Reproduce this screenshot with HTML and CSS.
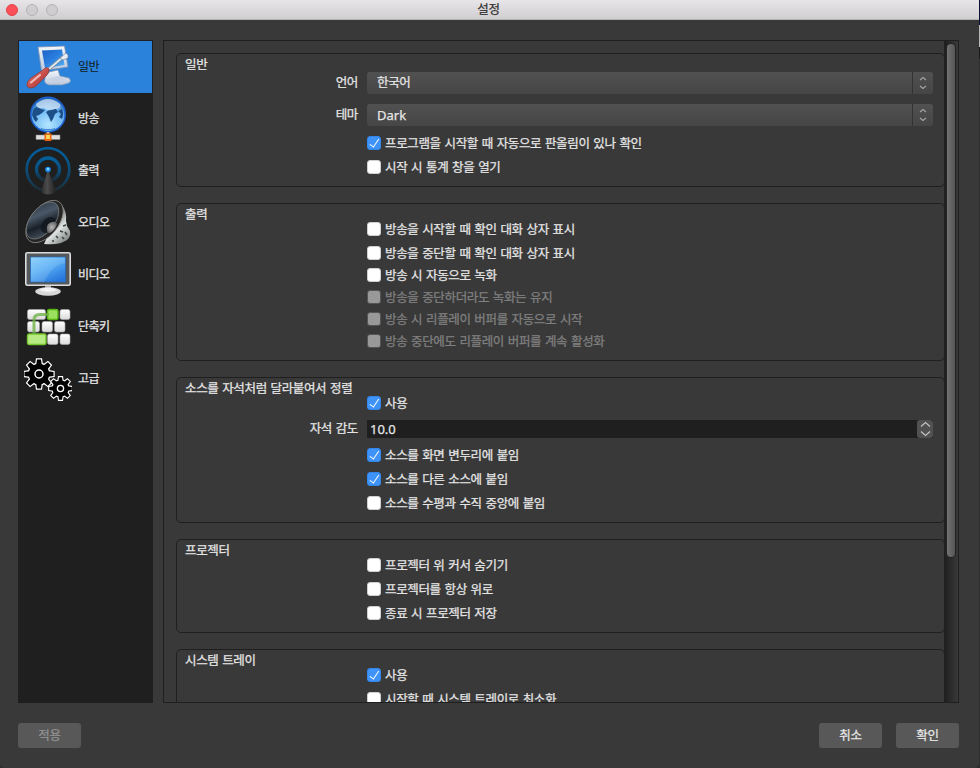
FILE: index.html
```html
<!DOCTYPE html>
<html lang="ko">
<head>
<meta charset="utf-8">
<title>설정</title>
<link rel="stylesheet" href="styles.css">
</head>
<body>
<svg width="0" height="0" class="defs">
  <defs>
    <linearGradient id="screen" x1="0" y1="0" x2="1" y2="1"><stop offset="0" stop-color="#1c62c4"/><stop offset=".5" stop-color="#2a7fe0"/><stop offset="1" stop-color="#5cb4f4"/></linearGradient>
    <linearGradient id="white" x1="0" y1="0" x2="0" y2="1"><stop offset="0" stop-color="#f4f7fb"/><stop offset="1" stop-color="#b9c6da"/></linearGradient>
    <linearGradient id="red" x1="0" y1="0" x2="1" y2="1"><stop offset="0" stop-color="#e79a98"/><stop offset=".5" stop-color="#c9504c"/><stop offset="1" stop-color="#9a2c2a"/></linearGradient>
    <radialGradient id="globe" cx=".5" cy=".8" r=".8"><stop offset="0" stop-color="#b4e6ff"/><stop offset=".6" stop-color="#6cb6f3"/><stop offset="1" stop-color="#1d5cab"/></radialGradient>
    <linearGradient id="ring" x1="0" y1="0" x2="0" y2="1"><stop offset="0" stop-color="#045f9c"/><stop offset=".6" stop-color="#0c4a74"/><stop offset="1" stop-color="#1c2c36"/></linearGradient>
    <linearGradient id="cone" x1="0" y1="0" x2="1" y2="0"><stop offset="0" stop-color="#2a2a2a"/><stop offset=".4" stop-color="#4c4c4c"/><stop offset="1" stop-color="#202020"/></linearGradient>
    <linearGradient id="speaker" x1="0" y1="0" x2="1" y2="1"><stop offset="0" stop-color="#2b3440"/><stop offset=".35" stop-color="#4a5867"/><stop offset=".6" stop-color="#1a2028"/><stop offset="1" stop-color="#566574"/></linearGradient>
    <radialGradient id="dust"><stop offset="0" stop-color="#b8b8b8"/><stop offset="1" stop-color="#6a6a6a"/></radialGradient>
    <linearGradient id="magnet" x1="0" y1="0" x2=".6" y2="1"><stop offset="0" stop-color="#333"/><stop offset=".45" stop-color="#8c918f"/><stop offset=".7" stop-color="#dfe3e2"/><stop offset="1" stop-color="#8d9492"/></linearGradient>
    <linearGradient id="video" x1="0" y1="0" x2=".7" y2="1"><stop offset="0" stop-color="#84cdfb"/><stop offset=".5" stop-color="#58aef5"/><stop offset="1" stop-color="#2877dc"/></linearGradient>
    <linearGradient id="key" x1="0" y1="0" x2="0" y2="1"><stop offset="0" stop-color="#fff"/><stop offset="1" stop-color="#dadada"/></linearGradient>
    <g id="teeth"><circle r="10.3"/><g id="tooth4"><path d="M-2.8-9L-2-14.5H2L2.8-9V9L2 14.5H-2L-2.8 9Z"/><path transform="rotate(90)" d="M-2.8-9L-2-14.5H2L2.8-9V9L2 14.5H-2L-2.8 9Z"/></g><use href="#tooth4" transform="rotate(45)"/></g>
  </defs>
</svg>
<div class="window">
  <header class="titlebar">
    <div class="lights"><i class="light close"></i><i class="light"></i><i class="light"></i></div>
    <h1>설정</h1>
  </header>
  <main class="body">
    <nav class="sidebar">
      <a class="item selected">
        <svg viewBox="0 0 48 48">
          <path d="M21 34L25 29 34 27 36 33 45 35Q48 38 45 40L38 42 25 42Q19 40 21 36Z" fill="url(#white)" stroke="#7c95b8" stroke-width=".7"/>
          <path d="M24 36L35 33 42 36 30 39Z" fill="#c6d2e4"/>
          <path d="M14 4L40.500 3 44 24 17.500 28Z" fill="url(#white)" stroke="#7b92b5" stroke-width=".8"/>
          <path d="M18 7.500L38 6.500 40.500 22 21 25Z" fill="url(#screen)"/>
          <path d="M25 26L39 14" stroke="#6c8095" stroke-width="3.600"/><path d="M25 26L39 14" stroke="#dce5ee" stroke-width="2.200"/>
          <path d="M36 15L42 10 44 12 44 15 39 17Z" fill="#e7edf4" stroke="#71849b" stroke-width=".7"/>
          <path d="M19 27Q22 23 25 26Q26 29 22 33L12 43Q6 47 3 43Q2 39 7 35Z" fill="url(#red)" stroke="#8b3a3a" stroke-width=".8"/>
          <path d="M7 39.500L16 32" stroke="#eebdba" stroke-width="2" stroke-linecap="round"/>
        </svg><span>일반</span></a>
      <a class="item">
        <svg viewBox="0 0 48 48">
          <circle cx="24" cy="19.500" r="17.200" fill="url(#globe)" stroke="#1d62cf" stroke-width="1.600"/>
          <path d="M9 15Q10 13 13 12L17 14 21 15 18 18 15 20 12 21 14 24 12 27Q9 24 8 20ZM22 17L27 14 32 14 34 17 31 19 29 24 27 27 25 22ZM34 16L38 14Q40 19 38 24L35 22 37 19Z" fill="#1c4f87"/>
          <path d="M12 9Q24-1 36 9Q38 14 31 14Q25 17 20 13Q12 14 12 9Z" fill="#dcebfa" opacity=".7"/>
          <path d="M17 33.500Q24 36 31 33.500" fill="none" stroke="#4289cf" stroke-width="1.300"/>
          <rect x="22.500" y="37" width="3" height="3" fill="#bbb"/><rect x="12" y="40" width="24" height="4.500" fill="#dedede" stroke="#888" stroke-width=".5"/>
          <rect x="20.500" y="38.500" width="7" height="7.500" rx="1" fill="#ee650c"/><rect x="22" y="40" width="4" height="4" fill="#ffd35a"/>
        </svg><span>방송</span></a>
      <a class="item">
        <svg viewBox="0 0 48 48">
          <circle cx="24" cy="22.500" r="21.300" fill="none" stroke="url(#ring)" stroke-width="2.600"/><circle cx="24" cy="22.500" r="11.500" fill="none" stroke="url(#ring)" stroke-width="3.400"/>
          <path d="M23.500 24H24.500L32 45Q24 50 17 45Z" fill="url(#cone)"/><circle cx="24" cy="22.500" r="2.800" fill="#178bea"/><circle cx="24" cy="22" r="1.300" fill="#8bd7ff"/>
        </svg><span>출력</span></a>
      <a class="item">
        <svg viewBox="0 0 48 48">
          <path d="M38 6Q43 13 42 22L43 27 46 32Q47 38 43 41L37 44Q30 46 20 45Z" fill="url(#magnet)"/>
          <path d="M39 27L42 26M36 32L39 33M41 33L43 36M32 37L34 39M38 38L40 40M28 42L30 42" stroke="#3c4341" stroke-width="1.600"/>
          <ellipse cx="20.500" cy="22.500" rx="14" ry="24.500" transform="rotate(38 20.500 22.500)" fill="#252525" stroke="#8a8a86" stroke-width=".8"/>
          <ellipse cx="18.500" cy="21.500" rx="12" ry="21.500" transform="rotate(38 18.500 21.500)" fill="url(#speaker)" stroke="#77797a" stroke-width=".8"/>
          <ellipse cx="24" cy="26" rx="6" ry="9" transform="rotate(38 24 26)" fill="#11161d" opacity=".8"/>
          <path d="M23 31Q22 24 28 23Q32 22 33 25Q31 31 26 34Q23 34 23 31Z" fill="url(#dust)"/>
        </svg><span>오디오</span></a>
      <a class="item">
        <svg viewBox="0 0 48 48">
          <path d="M21 34H27V40H21Z" fill="#aaa"/><ellipse cx="24" cy="40.500" rx="12.800" ry="4.200" fill="#d8d8d8"/><path d="M15 39Q24 34 33 39Q24 43 15 39Z" fill="#f3f3f3"/>
          <rect x="1.800" y="1.800" width="44.400" height="32.400" rx="1.500" fill="#55595c" stroke="#dcdcdc" stroke-width="1.600"/>
          <rect x="6.500" y="6" width="35" height="25" fill="url(#video)" stroke="#2467b5" stroke-width=".7"/><path d="M7 6.500H41V12Q28 14 20 31H7Z" fill="#fff" opacity=".12"/>
        </svg><span>비디오</span></a>
      <a class="item">
        <svg viewBox="0 0 48 48">
          <g fill="url(#key)" stroke="#a7a7a7" stroke-width=".6"><rect x="3.500" y="6.500" width="18" height="10" rx="2"/><rect x="36" y="6.500" width="10" height="10" rx="2"/><rect x="3.500" y="18.500" width="12" height="10.500" rx="2"/><rect x="18" y="18.500" width="10.500" height="10.500" rx="2"/><rect x="30.500" y="18.500" width="10.500" height="10.500" rx="2"/><rect x="23.500" y="31" width="10.500" height="10.500" rx="2"/><rect x="36" y="31" width="10" height="10.500" rx="2"/></g>
          <rect x="23.500" y="6.500" width="10.500" height="10" rx="2" fill="#9be15d" stroke="#56b313" stroke-width="1.400"/><rect x="3.500" y="31" width="18.500" height="10.500" rx="2" fill="#b9eb84" stroke="#74c72d" stroke-width="1.400"/>
          <path d="M10 31V17Q10 11.500 16 11.500H25" fill="none" stroke="#6eb346" stroke-width="3" opacity=".8"/>
        </svg><span>단축키</span></a>
      <a class="item">
        <svg viewBox="0 0 48 48">
          <g transform="translate(15 19)"><use href="#teeth" fill="#fff" stroke="#fff" stroke-width="2.400"/><use href="#teeth" fill="#000"/><circle r="4" fill="#000" stroke="#fff" stroke-width="1.500"/></g>
          <g transform="translate(36.500 33.500) scale(.78)"><use href="#teeth" fill="#fff" stroke="#fff" stroke-width="2.800"/><use href="#teeth" fill="#000"/><circle r="4" fill="#000" stroke="#fff" stroke-width="1.700"/></g>
        </svg><span>고급</span></a>
    </nav>
    <section class="panel">
      <div class="content">
        <section class="group form">
          <h2>일반</h2>
          <div class="rows">
            <div class="field"><label>언어</label><div class="combo"><span>한국어</span><i><svg viewBox="0 0 8 14"><path d="M1 4L4 1.500 7 4M1 10L4 12.500 7 10"/></svg></i></div></div>
            <div class="field"><label>테마</label><div class="combo latin"><span>Dark</span><i><svg viewBox="0 0 8 14"><path d="M1 4L4 1.500 7 4M1 10L4 12.500 7 10"/></svg></i></div></div>
            <label class="check on"><i></i>프로그램을 시작할 때 자동으로 판올림이 있나 확인</label>
            <label class="check"><i></i>시작 시 통계 창을 열기</label>
          </div>
        </section>
        <section class="group">
          <h2>출력</h2>
          <div class="rows">
            <label class="check"><i></i>방송을 시작할 때 확인 대화 상자 표시</label>
            <label class="check"><i></i>방송을 중단할 때 확인 대화 상자 표시</label>
            <label class="check tight"><i></i>방송 시 자동으로 녹화</label>
            <label class="check tight disabled"><i></i>방송을 중단하더라도 녹화는 유지</label>
            <label class="check tight disabled"><i></i>방송 시 리플레이 버퍼를 자동으로 시작</label>
            <label class="check tight disabled"><i></i>방송 중단에도 리플레이 버퍼를 계속 활성화</label>
          </div>
        </section>
        <section class="group">
          <h2>소스를 자석처럼 달라붙여서 정렬</h2>
          <div class="rows">
            <label class="check on"><i></i>사용</label>
            <div class="field number"><label>자석 감도</label><div class="spin"><span>10.0</span><i><svg viewBox="0 0 16 18"><path d="M4 6.500L8.500 2.500 13 6.500M4 11.500L8.500 15.500 13 11.500"/></svg></i></div></div>
            <label class="check on"><i></i>소스를 화면 변두리에 붙임</label>
            <label class="check on"><i></i>소스를 다른 소스에 붙임</label>
            <label class="check"><i></i>소스를 수평과 수직 중앙에 붙임</label>
          </div>
        </section>
        <section class="group">
          <h2>프로젝터</h2>
          <div class="rows">
            <label class="check"><i></i>프로젝터 위 커서 숨기기</label>
            <label class="check"><i></i>프로젝터를 항상 위로</label>
            <label class="check"><i></i>종료 시 프로젝터 저장</label>
          </div>
        </section>
        <section class="group">
          <h2>시스템 트레이</h2>
          <div class="rows">
            <label class="check on"><i></i>사용</label>
            <label class="check"><i></i>시작할 때 시스템 트레이로 최소화</label>
          </div>
        </section>
      </div>
      <div class="scrollbar"><div class="thumb"></div></div>
    </section>
  </main>
  <footer class="footer">
    <button class="apply" disabled>적용</button>
    <button>취소</button>
    <button>확인</button>
  </footer>
</div>
</body>
</html>
```
FILE: styles.css
```css
*, *::after { box-sizing: border-box; }
body {
  margin: 0;
  width: 980px;
  height: 768px;
  overflow: hidden;
  background: linear-gradient(#0c0d3c 0 25px, #b8b8b8 25px 47px, #1a1a1a 47px 59px, #2e2e2e 59px);
  color: #e6e6e6;
  font: 12.5px/18px "Noto Sans CJK KR", sans-serif;
  letter-spacing: -.36px;
  word-spacing: .65px;
  -webkit-text-stroke: .25px;
}
.defs { display: block; }
.window {
  display: flex;
  flex-direction: column;
  width: 979px;
  height: 768px;
  background: #393939;
  border-radius: 0 0 5px 5px;
}
.titlebar {
  display: grid;
  grid-template-columns: 1fr auto 1fr;
  align-items: center;
  height: 20px;
  padding: 0 6px;
  background: linear-gradient(#e7e5e7, #d0ced0);
  border-bottom: 1px solid #b0b4b2;
}
.titlebar h1 { margin: -2px 0 0 -2px; font-size: 12.5px; font-weight: 400; line-height: 18px; color: #333; }
.lights { display: flex; gap: 8px; }
.light { width: 12px; height: 12px; border-radius: 50%; background: #cfcdcf; border: 1px solid #b5b3b5; }
.light.close { background: #fc5058; border-color: #e2434b; }
.body { display: flex; gap: 10px; height: 683px; padding: 20px 20px 0 18px; }
.sidebar { width: 135px; height: 663px; padding: 1px; background: #1f1f1f; font-size: 12px; letter-spacing: -.6px; }
.item { display: flex; align-items: center; gap: 6px; height: 52px; padding-left: 5px; }
.item svg { width: 48px; height: 48px; flex: none; }
.item span { margin-bottom: 2px; }
.item.selected { background: #2a82da; color: #101820; -webkit-text-stroke: 0; }
.panel { display: flex; flex: 1; height: 663px; border: 1px solid #1f1f1f; overflow: hidden; }
.content { flex: 1; padding: 12px 0 0 12px; overflow: hidden; }
.group {
  display: grid;
  margin: 0 -1px 16px 0;
  border: 1px solid #1f1f1f;
  border-radius: 5px;
  padding: 0 11px 8px 8px;
}
.group h2 { grid-area: 1 / 1; margin: 1px 0 0; font-size: 12.5px; font-weight: 400; line-height: 18px; }
.rows { grid-area: 1 / 1; padding-top: 14px; }
.form .rows { padding-top: 18px; }
.field { display: grid; grid-template-columns: 173px 1fr; grid-template-rows: 22px; gap: 9px; align-items: center; }
.field > label { text-align: right; line-height: 18px; padding-bottom: 2px; }
.field + .field { margin-top: 10px; }
.form .field + .check { margin-top: 6px; }
.combo {
  display: flex;
  align-items: center;
  height: 22px;
  padding-left: 10px;
  background: linear-gradient(#515151, #464646);
  border-radius: 3px;
}
.combo span { flex: 1; margin-bottom: 2px; }
.combo.latin span { margin-bottom: 0; }
.combo i { display: flex; align-items: center; justify-content: center; width: 21px; height: 22px; border-left: 1px solid #333; }
.combo svg { width: 8px; height: 14px; }
.combo path { fill: none; stroke: #a5a5a5; stroke-width: 1.1; }
.latin, .spin { font-family: "Noto Sans", sans-serif; font-size: 13px; letter-spacing: 0; }
.field.number { grid-template-rows: 18px; margin: 6px 0; }
.number .spin { display: flex; align-items: center; height: 18px; padding-left: 3px; background: #1f1f1f; }
.spin span { flex: 1; }
.spin i { width: 16px; height: 18px; background: #515151; border-radius: 3px; }
.spin svg { display: block; width: 16px; height: 18px; }
.spin path { fill: none; stroke: #c4c4c4; stroke-width: 1.1; }
.check { display: flex; align-items: center; gap: 4px; height: 22px; margin-left: 182px; white-space: nowrap; }
.check + .check { margin-top: 2px; }
.check + .check.tight { margin-top: 0; }
.check i { position: relative; width: 14px; height: 14px; border-radius: 3px; background: #fff; border: 1px solid #d0d0d0; }
.check.on i { background: #3d93f8; border-color: #3486ea; }
.check.on i::after {
  content: "";
  position: absolute;
  left: 3.5px;
  top: 0;
  width: 5px;
  height: 9.5px;
  border: solid #fff;
  border-width: 0 1.5px 1.5px 0;
  transform: rotate(34deg);
}
.check.disabled { color: #808080; }
.check.disabled i { background: #999; border-color: #555; }
.scrollbar { width: 14px; padding: 3px 2px 0 3px; background: linear-gradient(90deg, #1e1e1e, #393939); }
.thumb { width: 8px; height: 513px; border-radius: 5px; background: linear-gradient(90deg, #727272, #555); box-shadow: 0 0 0 1px #222; }
.footer { display: flex; gap: 14px; padding: 20px 20px 0 18px; }
.footer button {
  width: 63px;
  height: 25px;
  padding: 0 0 2px;
  border: 0;
  border-radius: 3px;
  background: #585858;
  color: #e6e6e6;
  font: inherit;
  letter-spacing: inherit;
}
.footer .apply { margin-right: auto; color: #929292; }
```
